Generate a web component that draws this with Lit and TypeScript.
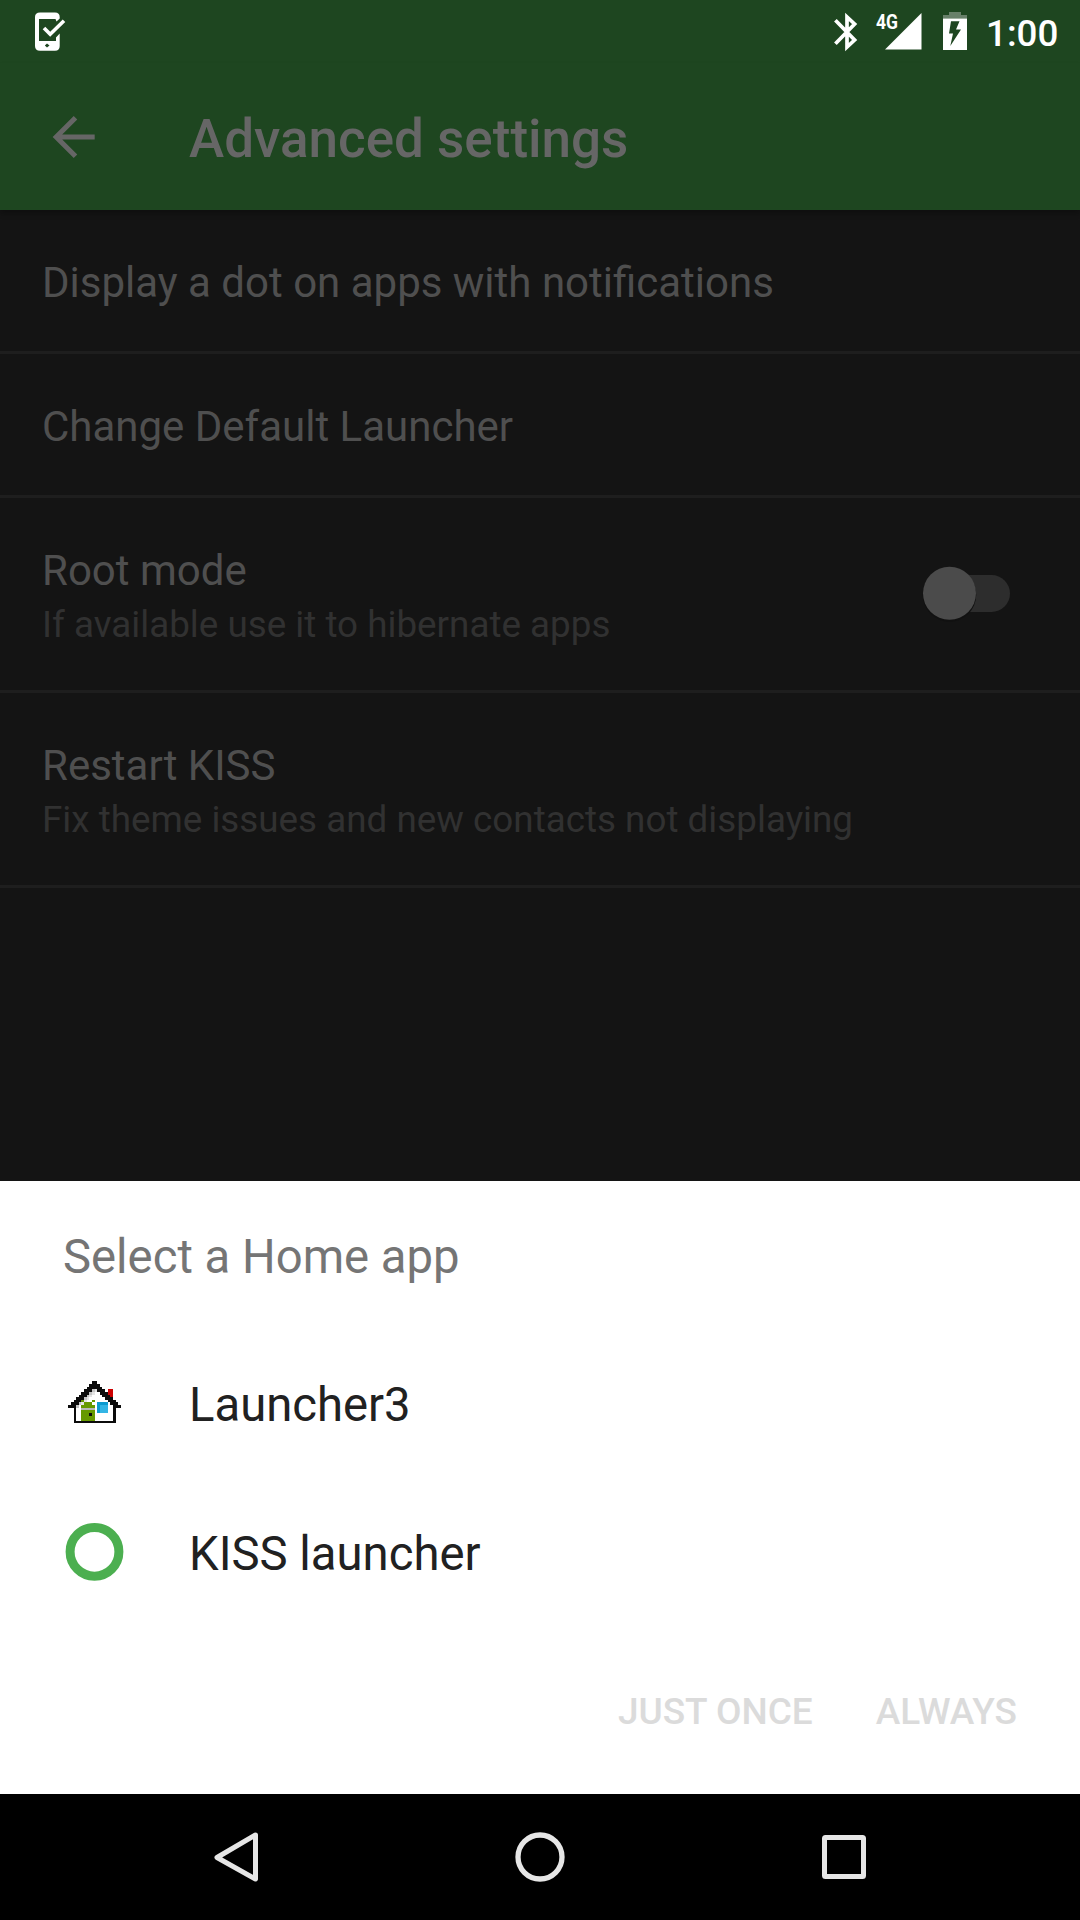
import { LitElement, html, svg, css } from "lit";
import { customElement } from "lit/decorators.js";

// Each run is x, y, width, height, fill on the 20x16 pixel grid of the house icon.
type Run = [number, number, number, number, string];
const K = "#0b0b0b", G = "#669900", L = "#c4c4c4", M = "#e4e4e4", B = "#33b5e5", D = "#0d9bd0", R = "#cc0000";
const slope: Run[] = [2, 3, 4, 5, 6, 7, 8].flatMap((y): Run[] => [
  [12 - y, y, 1, 1, L], [13 - y, y, 1, 1, M], [9 - y, y, 3, 1, K], [8 + y, y, 3, 1, K],
]);
const house: Run[] = [
  [3, 9, 14, 6, "#fff"], [4, 8, 12, 1, "#fff"], [5, 6, 10, 2, "#fff"], [7, 4, 6, 2, "#fff"], [9, 2, 2, 2, "#fff"],
  [15, 3, 2, 4, R], ...slope,
  [9, 0, 2, 1, K], [8, 1, 4, 1, K], [0, 9, 3, 1, K], [17, 9, 3, 1, K], [3, 9, 1, 1, L],
  [2, 9, 1, 7, K], [17, 9, 1, 7, K], [2, 15, 16, 1, K],
  [5, 7, 1, 1, G], [9, 7, 1, 1, G], [6, 8, 3, 1, G], [5, 9, 5, 1, G], [5, 10, 5, 1, "#b8b8b8"], [5, 11, 5, 4, G],
  [8, 12, 1, 1, K], [11, 8, 4, 4, B], [11, 8, 1, 4, D], [11, 8, 4, 1, D],
];

@customElement("app-root")
export class AppRoot extends LitElement {
  static styles = css`
    :host { display: flex; flex-direction: column; width: 1080px; height: 1920px; overflow: hidden; background: #141414; font-family: Roboto, sans-serif; }
    svg { display: block; flex: none; overflow: visible; }
    .status { display: flex; align-items: flex-start; height: 63px; background: #1e4620; color: #fff; }
    .device { margin: 12px 0 0 35px; }
    .bt { margin: 13px 0 0 auto; }
    .signal { margin: 13px 0 0 18px; }
    .battery { margin: 12px 0 0 21px; }
    .clock { width: 94px; margin-left: 19px; line-height: 67px; font-size: 36.75px; font-weight: 500; white-space: nowrap; }
    .bar { display: flex; align-items: center; height: 147px; background: #1e4620; color: #666; box-shadow: 0 4px 5px rgba(0, 0, 0, 0.25); }
    .back { margin: 0 0 0 52px; }
    .bar h1 { margin: 4px 0 0 94px; font-size: 53px; font-weight: 500; white-space: nowrap; }
    .list { flex: 1; }
    .row { display: flex; align-items: center; box-sizing: border-box; height: 144px; padding: 4px 67px 0 42px; border-bottom: 3px solid #1e1e1e; white-space: nowrap; }
    .row.tall { height: 195px; padding-top: 8px; }
    .label { flex: 1; }
    .name { font-size: 42px; line-height: 54px; color: #4f4f4f; }
    .hint { font-size: 36.8px; line-height: 54px; color: #313131; }
    .sheet { display: flex; flex-direction: column; height: 613px; background: #fff; white-space: nowrap; }
    .title { padding: 45px 0 0 63px; height: 104px; line-height: 62px; font-size: 47.25px; color: #757575; }
    .app { display: flex; align-items: center; height: 149px; padding-left: 63px; gap: 63px; color: #212121; font-size: 47.25px; }
    .actions { display: flex; justify-content: flex-end; gap: 63px; padding: 60px 63px 0 0; line-height: 48px; font-size: 37px; font-weight: 500; color: #dbdbdb; }
    .nav { display: flex; align-items: center; justify-content: center; height: 126px; background: #000; gap: 244px; }
  `;

  render() {
    return html`
      <div class="status">
        <svg class="device" width="31" height="40" viewBox="0 0 31 40"><path fill="#fff" fill-rule="evenodd" d="M5 .5H20Q24.7.5 24.7 5V6.5L21.5 9.5 20.5 7H4V29H21V25.5L24.7 21.5V34Q24.7 38.7 20 38.7H5Q0 38.7 0 34V5Q0 .5 5 .5ZM12 31.5L9.8 33.5 12 35.5 14.5 33.5Z"/><path d="M9 16L15.2 22.3 29 8.8" fill="none" stroke="#fff" stroke-width="3.6"/></svg>
        <svg class="bt" width="24" height="39" viewBox="0 0 24 39"><path d="M1.4 7.3L20.6 27 13 34V4L20.6 11 1.4 30.8" fill="none" stroke="#fff" stroke-width="3.7"/></svg>
        <svg class="signal" width="46" height="37" viewBox="0 0 46 37"><path d="M9 36.5L45.5 0V36.5Z" fill="#fff"/><text x="0" y="16" font-size="21" font-weight="700" font-family="Roboto" textLength="22" lengthAdjust="spacingAndGlyphs" fill="#fff">4G</text></svg>
        <svg class="battery" width="24" height="38" viewBox="0 0 24 38"><path d="M0 6.5V3H6V0H18V3H24V6.5Z" fill="#688069"/><path fill-rule="evenodd" fill="#fff" d="M0 6.5H24V38H0ZM8 9.3L6 21.5H10L7.3 34 18 17.5H13L16.5 9.3Z"/></svg>
        <span class="clock">1:00</span>
      </div>
      <div class="bar">
        <svg class="back" width="43" height="42" viewBox="0 0 43 42"><path d="M23.5 1.8L4.2 21 23.5 40.2M4 21H42.7" fill="none" stroke="#666" stroke-width="5"/></svg>
        <h1>Advanced settings</h1>
      </div>
      <div class="list">
        <div class="row"><div class="label name">Display a dot on apps with notifications</div></div>
        <div class="row"><div class="label name">Change Default Launcher</div></div>
        <div class="row tall">
          <div class="label"><div class="name">Root mode</div><div class="hint">If available use it to hibernate apps</div></div>
          <svg width="90" height="60" viewBox="0 4 90 60"><rect x="12" y="11" width="75" height="37" rx="18.5" fill="#2d2d2d"/><circle cx="26.5" cy="31" r="26.7" fill="#111"/><circle cx="26.5" cy="29.3" r="26.5" fill="#4b4b4b"/></svg>
        </div>
        <div class="row tall">
          <div class="label"><div class="name">Restart KISS</div><div class="hint">Fix theme issues and new contacts not displaying</div></div>
        </div>
      </div>
      <div class="sheet">
        <div class="title">Select a Home app</div>
        <div class="app">
          <svg width="63" height="63" viewBox="0 0 63 63" shape-rendering="crispEdges"><g transform="translate(5.3 8.4) scale(2.63)">${house.map(([x, y, w, h, f]) => svg`<rect x=${x} y=${y} width=${w} height=${h} fill=${f}/>`)}</g></svg>
          <span>Launcher3</span>
        </div>
        <div class="app">
          <svg width="63" height="63" viewBox="0 0 63 63"><circle cx="31.5" cy="29.8" r="24.4" fill="none" stroke="#4caf50" stroke-width="9"/></svg>
          <span>KISS launcher</span>
        </div>
        <div class="actions"><span>JUST ONCE</span><span>ALWAYS</span></div>
      </div>
      <div class="nav">
        <svg width="60" height="60" viewBox="0 0 60 60"><path d="M49.5 8L11 30.5 49.5 52Z" fill="none" stroke="#e6e6e6" stroke-width="5" stroke-linejoin="round"/></svg>
        <svg width="60" height="60" viewBox="0 0 60 60"><circle cx="30" cy="30" r="22" fill="none" stroke="#e6e6e6" stroke-width="5.3"/></svg>
        <svg width="60" height="60" viewBox="0 0 60 60"><rect x="10.5" y="10.5" width="39" height="39" rx="1" fill="none" stroke="#e6e6e6" stroke-width="5"/></svg>
      </div>`;
  }
}
